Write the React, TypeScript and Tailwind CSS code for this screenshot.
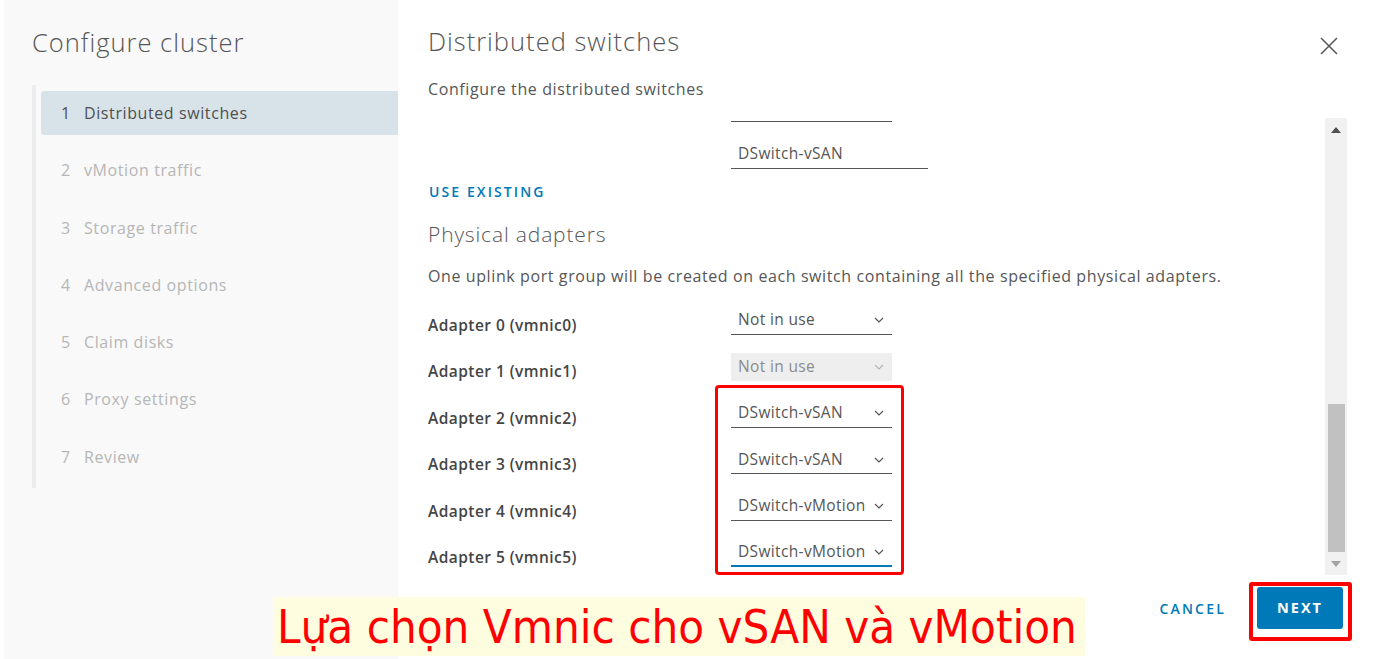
import React from "react";

const ui = { fontFamily: '"Open Sans", "Liberation Sans", sans-serif' };

const steps = [
  "Distributed switches",
  "vMotion traffic",
  "Storage traffic",
  "Advanced options",
  "Claim disks",
  "Proxy settings",
  "Review",
];

const adapters: { label: string; value: string; disabled?: boolean; focused?: boolean }[] = [
  { label: "Adapter 0 (vmnic0)", value: "Not in use" },
  { label: "Adapter 1 (vmnic1)", value: "Not in use", disabled: true },
  { label: "Adapter 2 (vmnic2)", value: "DSwitch-vSAN" },
  { label: "Adapter 3 (vmnic3)", value: "DSwitch-vSAN" },
  { label: "Adapter 4 (vmnic4)", value: "DSwitch-vMotion" },
  { label: "Adapter 5 (vmnic5)", value: "DSwitch-vMotion", focused: true },
];

function Chevron({ light }: { light?: boolean }) {
  return (
    <svg width="10" height="6" viewBox="0 0 10 6" className="shrink-0">
      <path
        d="M1 1 L5 5 L9 1"
        fill="none"
        stroke={light ? "#b5b5b5" : "#565656"}
        strokeWidth="1.2"
      />
    </svg>
  );
}

function Select({ value, disabled, focused }: { value: string; disabled?: boolean; focused?: boolean }) {
  return (
    <div
      className={
        "ml-[303px] flex h-[28px] w-[161px] items-center justify-between pl-[7px] pr-[8px] " +
        (disabled
          ? "bg-[#eeeeee] text-[#8c8c8c]"
          : focused
          ? "border-b-[2px] border-[#0079b8] text-[#565656]"
          : "border-b border-[#565656] text-[#565656]")
      }
    >
      <span className="whitespace-nowrap text-[15.5px] leading-none tracking-[0.35px]">{value}</span>
      <Chevron light={disabled} />
    </div>
  );
}

function Sidebar() {
  return (
    <aside className="flex h-full w-[394px] shrink-0 flex-col bg-[#f9f9f9] pl-[28px]">
      <h1 className="mt-[26px] text-[25.5px] font-light leading-[32px] tracking-[1px] text-[#565656]">
        Configure cluster
      </h1>
      <nav className="mt-[27px] flex w-full flex-col gap-[13.3px] border-l-[4px] border-[#ececec] pb-[9px] pl-[5px] pt-[6px]">
        {steps.map((s, i) => (
          <div
            key={s}
            className={
              "flex h-[44px] items-center rounded-l-[3px] pl-[20px] text-[16px] tracking-[0.6px] " +
              (i === 0 ? "bg-[#d8e3e9] text-[#4f4f4f]" : "text-[#b6b6b6]")
            }
          >
            <span className="w-[23px]">{i + 1}</span>
            <span>{s}</span>
          </div>
        ))}
      </nav>
    </aside>
  );
}

function Scrollbar() {
  return (
    <div className="flex h-full w-[22px] shrink-0 flex-col items-center bg-[#f1f1f1]">
      <svg width="10" height="6" viewBox="0 0 10 6" className="mt-[9px]">
        <path d="M0 6 L5 0 L10 6 Z" fill="#505050" />
      </svg>
      <div className="flex-1" />
      <div className="h-[148px] w-[17px] bg-[#c1c1c1]" />
      <svg width="10" height="6" viewBox="0 0 10 6" className="mb-[8px] mt-[9px]">
        <path d="M0 0 L10 0 L5 6 Z" fill="#a3a3a3" />
      </svg>
    </div>
  );
}

function Content() {
  return (
    <div className="flex h-full min-w-0 flex-1 flex-col overflow-hidden">
      <div className="ml-[303px] h-[4px] w-[161px] border-b border-[#565656]" />
      <div className="ml-[303px] mt-[18px] flex h-[29px] w-[197px] items-center border-b border-[#565656] pl-[7px] text-[15.5px] tracking-[0.35px] text-[#565656]">
        DSwitch-vSAN
      </div>
      <div className="mt-[14px] pl-[1px] text-[14px] font-semibold leading-[18px] tracking-[2.1px] text-[#0079b8]">
        USE EXISTING
      </div>
      <div className="mt-[20px] text-[21px] font-light leading-[26px] tracking-[0.85px] text-[#565656]">
        Physical adapters
      </div>
      <div className="mt-[19px] whitespace-nowrap text-[16px] leading-[20px] tracking-[0.6px] text-[#565656]">
        One uplink port group will be created on each switch containing all the specified physical adapters.
      </div>
      <div className="mt-[20.5px] flex flex-col gap-[18.5px]">
        {adapters.map((a) => (
          <div key={a.label} className="relative flex h-[28px] items-start">
            <span className="absolute left-0 top-[8px] whitespace-nowrap text-[15.5px] font-semibold leading-[20px] tracking-[0.45px] text-[#454545]">
              {a.label}
            </span>
            <Select value={a.value} disabled={a.disabled} focused={a.focused} />
          </div>
        ))}
      </div>
    </div>
  );
}

export default function App() {
  return (
    <div className="relative h-[659px] w-[1373px] overflow-hidden bg-white" style={ui}>
      <div className="flex h-full">
        <div className="w-[4px] shrink-0 bg-white" />
        <Sidebar />
        <main className="flex h-full min-w-0 flex-1 flex-col pl-[30px] pr-[26px]">
          <div className="flex h-[118px] shrink-0 flex-col">
            <div className="flex items-start justify-between">
              <h2 className="mt-[25px] text-[25.5px] font-light leading-[32px] tracking-[1px] text-[#565656]">
                Distributed switches
              </h2>
              <button className="mr-[9px] mt-[37px] text-[#565656]" aria-label="Close">
                <svg width="18" height="18" viewBox="0 0 18 18">
                  <path d="M1 1 L17 17 M17 1 L1 17" stroke="#595959" strokeWidth="1.6" fill="none" />
                </svg>
              </button>
            </div>
            <p className="mt-[22px] text-[16px] leading-[20px] tracking-[0.6px] text-[#565656]">
              Configure the distributed switches
            </p>
          </div>
          <div className="flex h-[457px] shrink-0">
            <Content />
            <Scrollbar />
          </div>
          <div className="flex flex-1 items-start justify-end">
            <button className="mr-[31px] mt-[23px] text-[14px] font-semibold tracking-[2.2px] text-[#0079b8]">
              CANCEL
            </button>
            <button className="mr-[4px] mt-[12px] h-[42px] w-[86px] rounded-[3px] bg-[#0079b8] text-[14.5px] font-bold tracking-[2px] text-white">
              NEXT
            </button>
          </div>
        </main>
      </div>

      {/* callout frames */}
      <div className="pointer-events-none absolute left-[715px] top-[385px] h-[190px] w-[189px] rounded-[4px] border-[3px] border-[#ff0000]" />
      <div className="pointer-events-none absolute left-[1249px] top-[582px] h-[59px] w-[103px] rounded-[3px] border-[4px] border-[#ff0000]" />

      {/* caption */}
      <div
        className="absolute left-[273px] top-[597px] flex h-[59px] w-[812px] items-center bg-[#fffde0] pl-[4px] text-[47px] leading-none text-[#ff0000]"
        style={{ fontFamily: '"DejaVu Sans Condensed", "DejaVu Sans", sans-serif' }}
      >
        Lựa chọn Vmnic cho vSAN và vMotion
      </div>
    </div>
  );
}
